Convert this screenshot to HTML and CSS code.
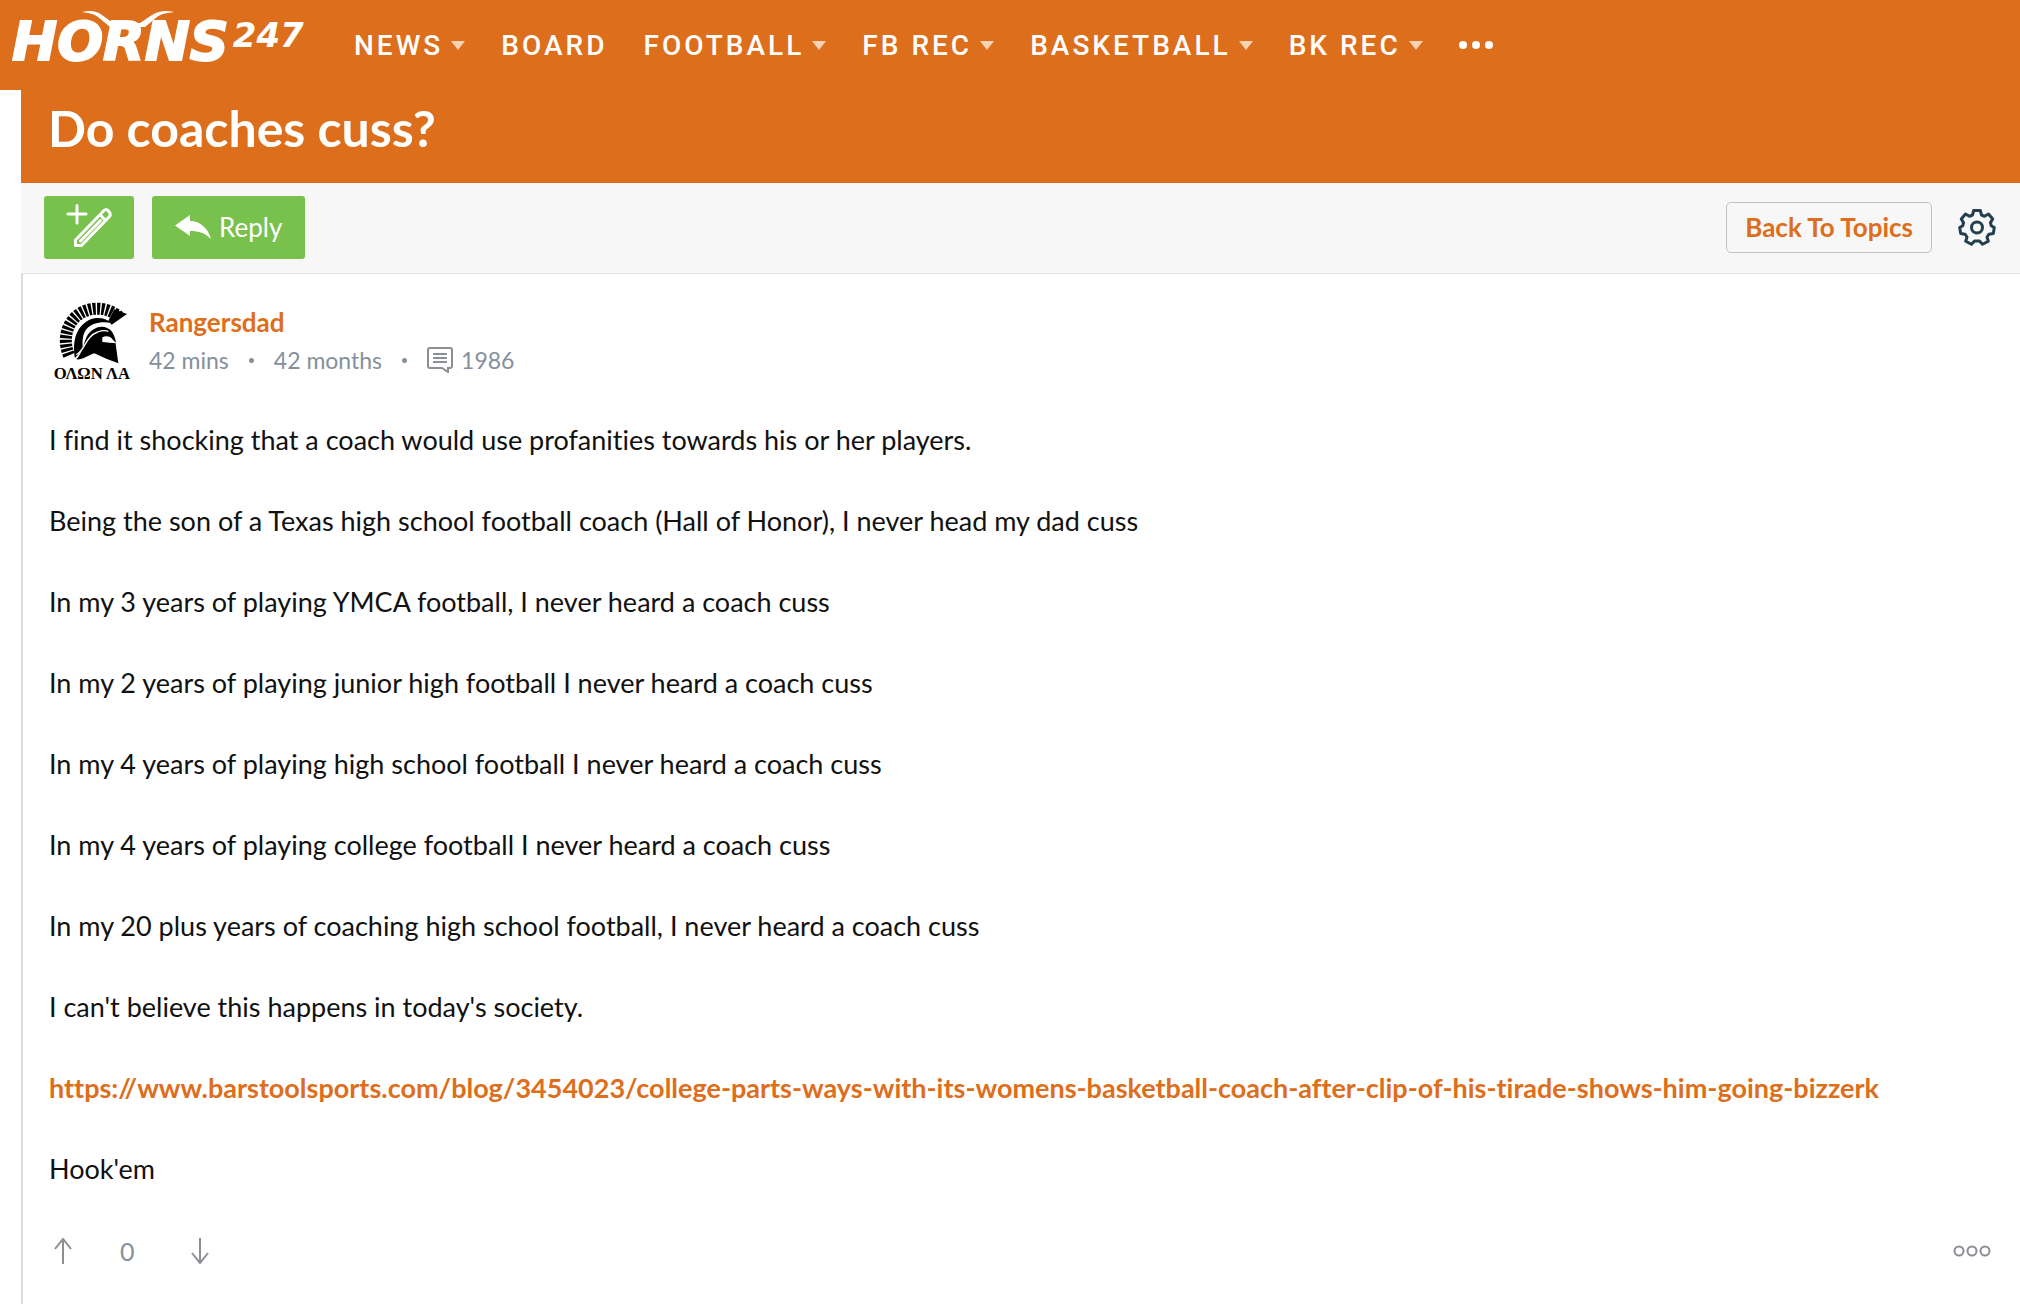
FILE: index.html
```html
<!DOCTYPE html>
<html lang="en">
<head>
    <meta charset="UTF-8">
    <meta name="viewport" content="width=device-width, initial-scale=1.0">
    <title>Do coaches cuss?</title>
    <link rel="stylesheet" href="styles.css">
</head>
<body>
    <header class="site-header">
        <a href="#" class="logo">
            <span class="logo-name">HORNS</span><span class="logo-network">247</span>
            <svg class="logo-horns" viewBox="0 0 92 16" aria-hidden="true">
                <path d="M0 1 C8 -1 15 0 20 4 L31 12 H58 L70 4 C76 0 84 -1 92 1 C84 2 79 3 75 6 L63 16 H28 L16 6 C12 3 7 2 0 1 Z"/>
            </svg>
        </a>
        <nav class="main-nav">
            <a href="#" class="nav-link has-menu">NEWS</a>
            <a href="#" class="nav-link">BOARD</a>
            <a href="#" class="nav-link has-menu">FOOTBALL</a>
            <a href="#" class="nav-link has-menu">FB REC</a>
            <a href="#" class="nav-link has-menu">BASKETBALL</a>
            <a href="#" class="nav-link has-menu">BK REC</a>
            <button type="button" class="nav-more" aria-label="More">
                <svg width="34" height="10" viewBox="0 0 34 10"><circle cx="4" cy="5" r="4"/><circle cx="17" cy="5" r="4"/><circle cx="30" cy="5" r="4"/></svg>
            </button>
        </nav>
    </header>

    <main class="topic">
        <div class="topic-title">
            <h1>Do coaches cuss?</h1>
        </div>

        <div class="toolbar">
            <button type="button" class="button-green button-new" aria-label="New topic">
                <svg width="46" height="46" viewBox="0 0 46 46">
                    <path class="plus" d="M2 10 H20 M11 1.500 V19"/>
                    <path class="pencil" d="M9.500 36 L38 6.500 Q40 4.500 42 6.500 L43.500 8.500 Q45 10.500 43.500 12.500 L15.500 41.500 H9.500 Z M34 10.500 L39.500 16.500 M14.500 37 L34.500 16.500"/>
                </svg>
            </button>
            <button type="button" class="button-green button-reply">
                <svg width="36" height="24" viewBox="0 0 36 24"><path d="M0 10.500 L15 0 V6 C25 6 33 13 36 24 C30 18 24 16 15 16 V21 Z"/></svg>
                Reply
            </button>
            <a href="#" class="button-back">Back To Topics</a>
            <button type="button" class="button-settings" aria-label="Settings">
                <svg width="38" height="38" viewBox="0 0 38 38">
                    <path d="M15.700 2.500 H22.300 L23.500 7 L26.500 8.300 L30.500 6 L34.700 11 L32.500 14.600 L33.200 17.700 L36.300 19.500 L35.300 25.500 L31 26.200 L29 29 L30.300 33.200 L24.500 36.300 L21.500 33 H16.500 L13.500 36.300 L7.700 33.200 L9 29 L7 26.200 L2.700 25.500 L1.700 19.500 L4.800 17.700 L5.500 14.600 L3.300 11 L7.500 6 L11.500 8.300 L14.500 7 Z"/>
                    <circle cx="19" cy="19.500" r="5.500"/>
                </svg>
            </button>
        </div>

        <article class="post">
            <header class="post-header">
                <svg class="avatar" viewBox="42 30 246 246" role="img" aria-label="Rangersdad avatar">
                    <path class="crest" d="M90 196 C70 150 82 96 124 70 C160 48 208 52 240 80"/>
                    <path d="M226 58 L264 72 L218 104 L208 92 Z"/>
                    <path d="M108 204 C100 160 108 112 150 90 C174 79 200 84 216 98 C184 93 156 100 142 118 C128 136 130 164 132 178 Z"/>
                    <path d="M112 208 C132 188 134 158 144 138 C162 108 198 100 218 124 C226 136 232 152 230 162 L238 220 L202 206 L166 190 C148 196 130 210 112 208 Z"/>
                    <path class="helmet-line" d="M112 194 C140 180 138 140 176 126 C186 122 198 120 208 124"/>
                    <path class="helmet-eye" d="M190 142 C202 136 216 140 220 148 L232 160 C220 160 202 156 190 156 Z"/>
                    <text x="44" y="268">ΟΛΩΝ ΛΑ</text>
                </svg>
                <div class="post-author">
                    <a href="#" class="author-name">Rangersdad</a>
                    <div class="post-meta">
                        <span>42 mins</span>
                        <i class="dot"></i>
                        <span>42 months</span>
                        <i class="dot"></i>
                        <span class="post-count">
                            <svg width="26" height="26" viewBox="0 0 26 26"><path d="M3 1 H23 Q25 1 25 3 V19 Q25 21 23 21 H21 V25 L15 21 H3 Q1 21 1 19 V3 Q1 1 3 1 Z M6 7 H20 M6 11 H20 M6 15 H20"/></svg>
                            1986
                        </span>
                    </div>
                </div>
            </header>

            <div class="post-body">
                <p>I find it shocking that a coach would use profanities towards his or her players.</p>
                <p>Being the son of a Texas high school football coach (Hall of Honor), I never head my dad cuss</p>
                <p>In my 3 years of playing YMCA football, I never heard a coach cuss</p>
                <p>In my 2 years of playing junior high football I never heard a coach cuss</p>
                <p>In my 4 years of playing high school football I never heard a coach cuss</p>
                <p>In my 4 years of playing college football I never heard a coach cuss</p>
                <p>In my 20 plus years of coaching high school football, I never heard a coach cuss</p>
                <p>I can't believe this happens in today's society.</p>
                <p><a href="#">https://www.barstoolsports.com/blog/3454023/college-parts-ways-with-its-womens-basketball-coach-after-clip-of-his-tirade-shows-him-going-bizzerk</a></p>
                <p>Hook'em</p>
            </div>

            <footer class="post-footer">
                <button type="button" class="vote" aria-label="Vote up">
                    <svg width="18" height="26" viewBox="0 0 18 26"><path d="M9 26 V1 M1 11 L9 1 L17 11"/></svg>
                </button>
                <span class="score">0</span>
                <button type="button" class="vote" aria-label="Vote down">
                    <svg width="18" height="26" viewBox="0 0 18 26"><path d="M9 0 V25 M1 15 L9 25 L17 15"/></svg>
                </button>
                <button type="button" class="post-more" aria-label="More options">
                    <svg width="38" height="12" viewBox="0 0 38 12"><circle cx="6" cy="6" r="4.500"/><circle cx="19" cy="6" r="4.500"/><circle cx="32" cy="6" r="4.500"/></svg>
                </button>
            </footer>
        </article>
    </main>
</body>
</html>
```
FILE: styles.css
```css
:root {
    --orange: #dd6e1b;
    --green: #78c14d;
    --text-color: #111111;
    --muted: #84909c;
    --icon-gray: #8c8f93;
    --navy: #233f4f;
    --toolbar-background: #f7f7f7;
    --border-color: #e2e2e2;
}

* {
    margin: 0;
    padding: 0;
    box-sizing: border-box;
}

body {
    font-family: 'Lato', sans-serif;
    font-size: 27px;
    font-variant-ligatures: none;
    background-color: #ffffff;
    color: var(--text-color);
}

a {
    color: var(--orange);
    text-decoration: none;
}

button {
    font-family: inherit;
    background: none;
    border: none;
    cursor: pointer;
}

svg {
    display: block;
}

/* Site header */
.site-header {
    display: flex;
    align-items: center;
    height: 90px;
    padding-left: 12px;
    background-color: var(--orange);
}

.logo {
    position: relative;
    display: flex;
    align-items: flex-start;
    width: 342px;
    height: 64px;
    color: #ffffff;
    font-family: 'DejaVu Sans', sans-serif;
    font-weight: 700;
    font-style: italic;
}

.logo-name {
    font-size: 54px;
    line-height: 58px;
    -webkit-text-stroke: 2px #ffffff;
}

.logo-network {
    margin-left: 4px;
    font-size: 34px;
    line-height: 44px;
}

.logo-horns {
    position: absolute;
    left: 70px;
    top: -2px;
    width: 92px;
    height: 16px;
    fill: #ffffff;
}

.main-nav {
    display: flex;
    align-items: center;
    gap: 36px;
}

.nav-link {
    display: flex;
    align-items: center;
    color: #ffffff;
    font-family: 'Roboto', sans-serif;
    font-size: 28px;
    font-weight: 500;
    letter-spacing: 3px;
}

.has-menu::after {
    content: '';
    margin-left: 8px;
    border: 7px solid transparent;
    border-top: 9px solid #f8d2b3;
    border-bottom: 0;
}

.nav-more svg {
    fill: #ffffff;
}

/* Topic */
.topic {
    margin-left: 21px;
}

.topic-title {
    padding: 8px 27px 25px;
    background-color: var(--orange);
}

h1 {
    color: #ffffff;
    font-size: 50px;
    line-height: 60px;
    font-weight: 700;
}

.toolbar {
    display: flex;
    align-items: center;
    height: 91px;
    padding: 0 24px 2px 23px;
    background-color: var(--toolbar-background);
    border-bottom: 1px solid var(--border-color);
}

.button-green {
    display: flex;
    align-items: center;
    justify-content: center;
    height: 63px;
    background-color: var(--green);
    border-radius: 3px;
    color: #ffffff;
    font-size: 26px;
}

.button-new {
    width: 90px;
    margin-right: 18px;
}

.button-new path {
    fill: none;
    stroke: #ffffff;
    stroke-width: 3;
    stroke-linecap: round;
    stroke-linejoin: round;
}

.button-reply {
    gap: 8px;
    padding: 0 23px;
}

.button-reply svg {
    fill: #ffffff;
}

.button-back {
    margin-left: auto;
    padding: 0 18px;
    border: 1px solid #bfc2c4;
    border-radius: 5px;
    font-weight: 700;
    font-size: 26px;
    line-height: 49px;
}

.button-settings {
    margin-left: 26px;
}

.button-settings svg {
    fill: none;
    stroke: var(--navy);
    stroke-width: 3;
    stroke-linejoin: round;
}

/* Post */
.post {
    min-height: 1030px;
    padding: 26px 25px 40px 26px;
    border-left: 2px solid #dcdcdc;
}

.post-header {
    display: flex;
    align-items: center;
    gap: 14px;
    margin-bottom: 37px;
    padding-left: 4px;
}

.avatar {
    width: 82px;
    height: 82px;
}

.avatar text {
    font-family: 'Liberation Serif', serif;
    font-size: 50px;
    font-weight: 700;
}

.crest {
    fill: none;
    stroke: #000000;
    stroke-width: 36;
    stroke-dasharray: 9 4;
}

.helmet-line {
    fill: none;
    stroke: #ffffff;
    stroke-width: 4;
}

.helmet-eye {
    fill: #ffffff;
}

.author-name {
    display: block;
    font-size: 26px;
    line-height: 38px;
    font-weight: 700;
}

.post-meta {
    display: flex;
    align-items: center;
    gap: 20px;
    color: var(--muted);
    font-size: 23px;
    line-height: 38px;
}

.dot {
    width: 5px;
    height: 5px;
    border-radius: 50%;
    background-color: var(--muted);
}

.post-count {
    display: flex;
    align-items: center;
    gap: 8px;
}

.post-count path,
.vote path,
.post-more circle {
    fill: none;
    stroke: var(--icon-gray);
    stroke-width: 2;
}

.post-body p {
    margin-bottom: 40px;
    line-height: 41px;
}

.post-body a {
    font-weight: 700;
    overflow-wrap: anywhere;
}

.post-footer {
    display: flex;
    align-items: center;
    padding: 7px 4px 0 5px;
}

.score {
    margin: 0 56px 0 48px;
    color: var(--muted);
    font-size: 25px;
}

.post-more {
    margin-left: auto;
}
```
